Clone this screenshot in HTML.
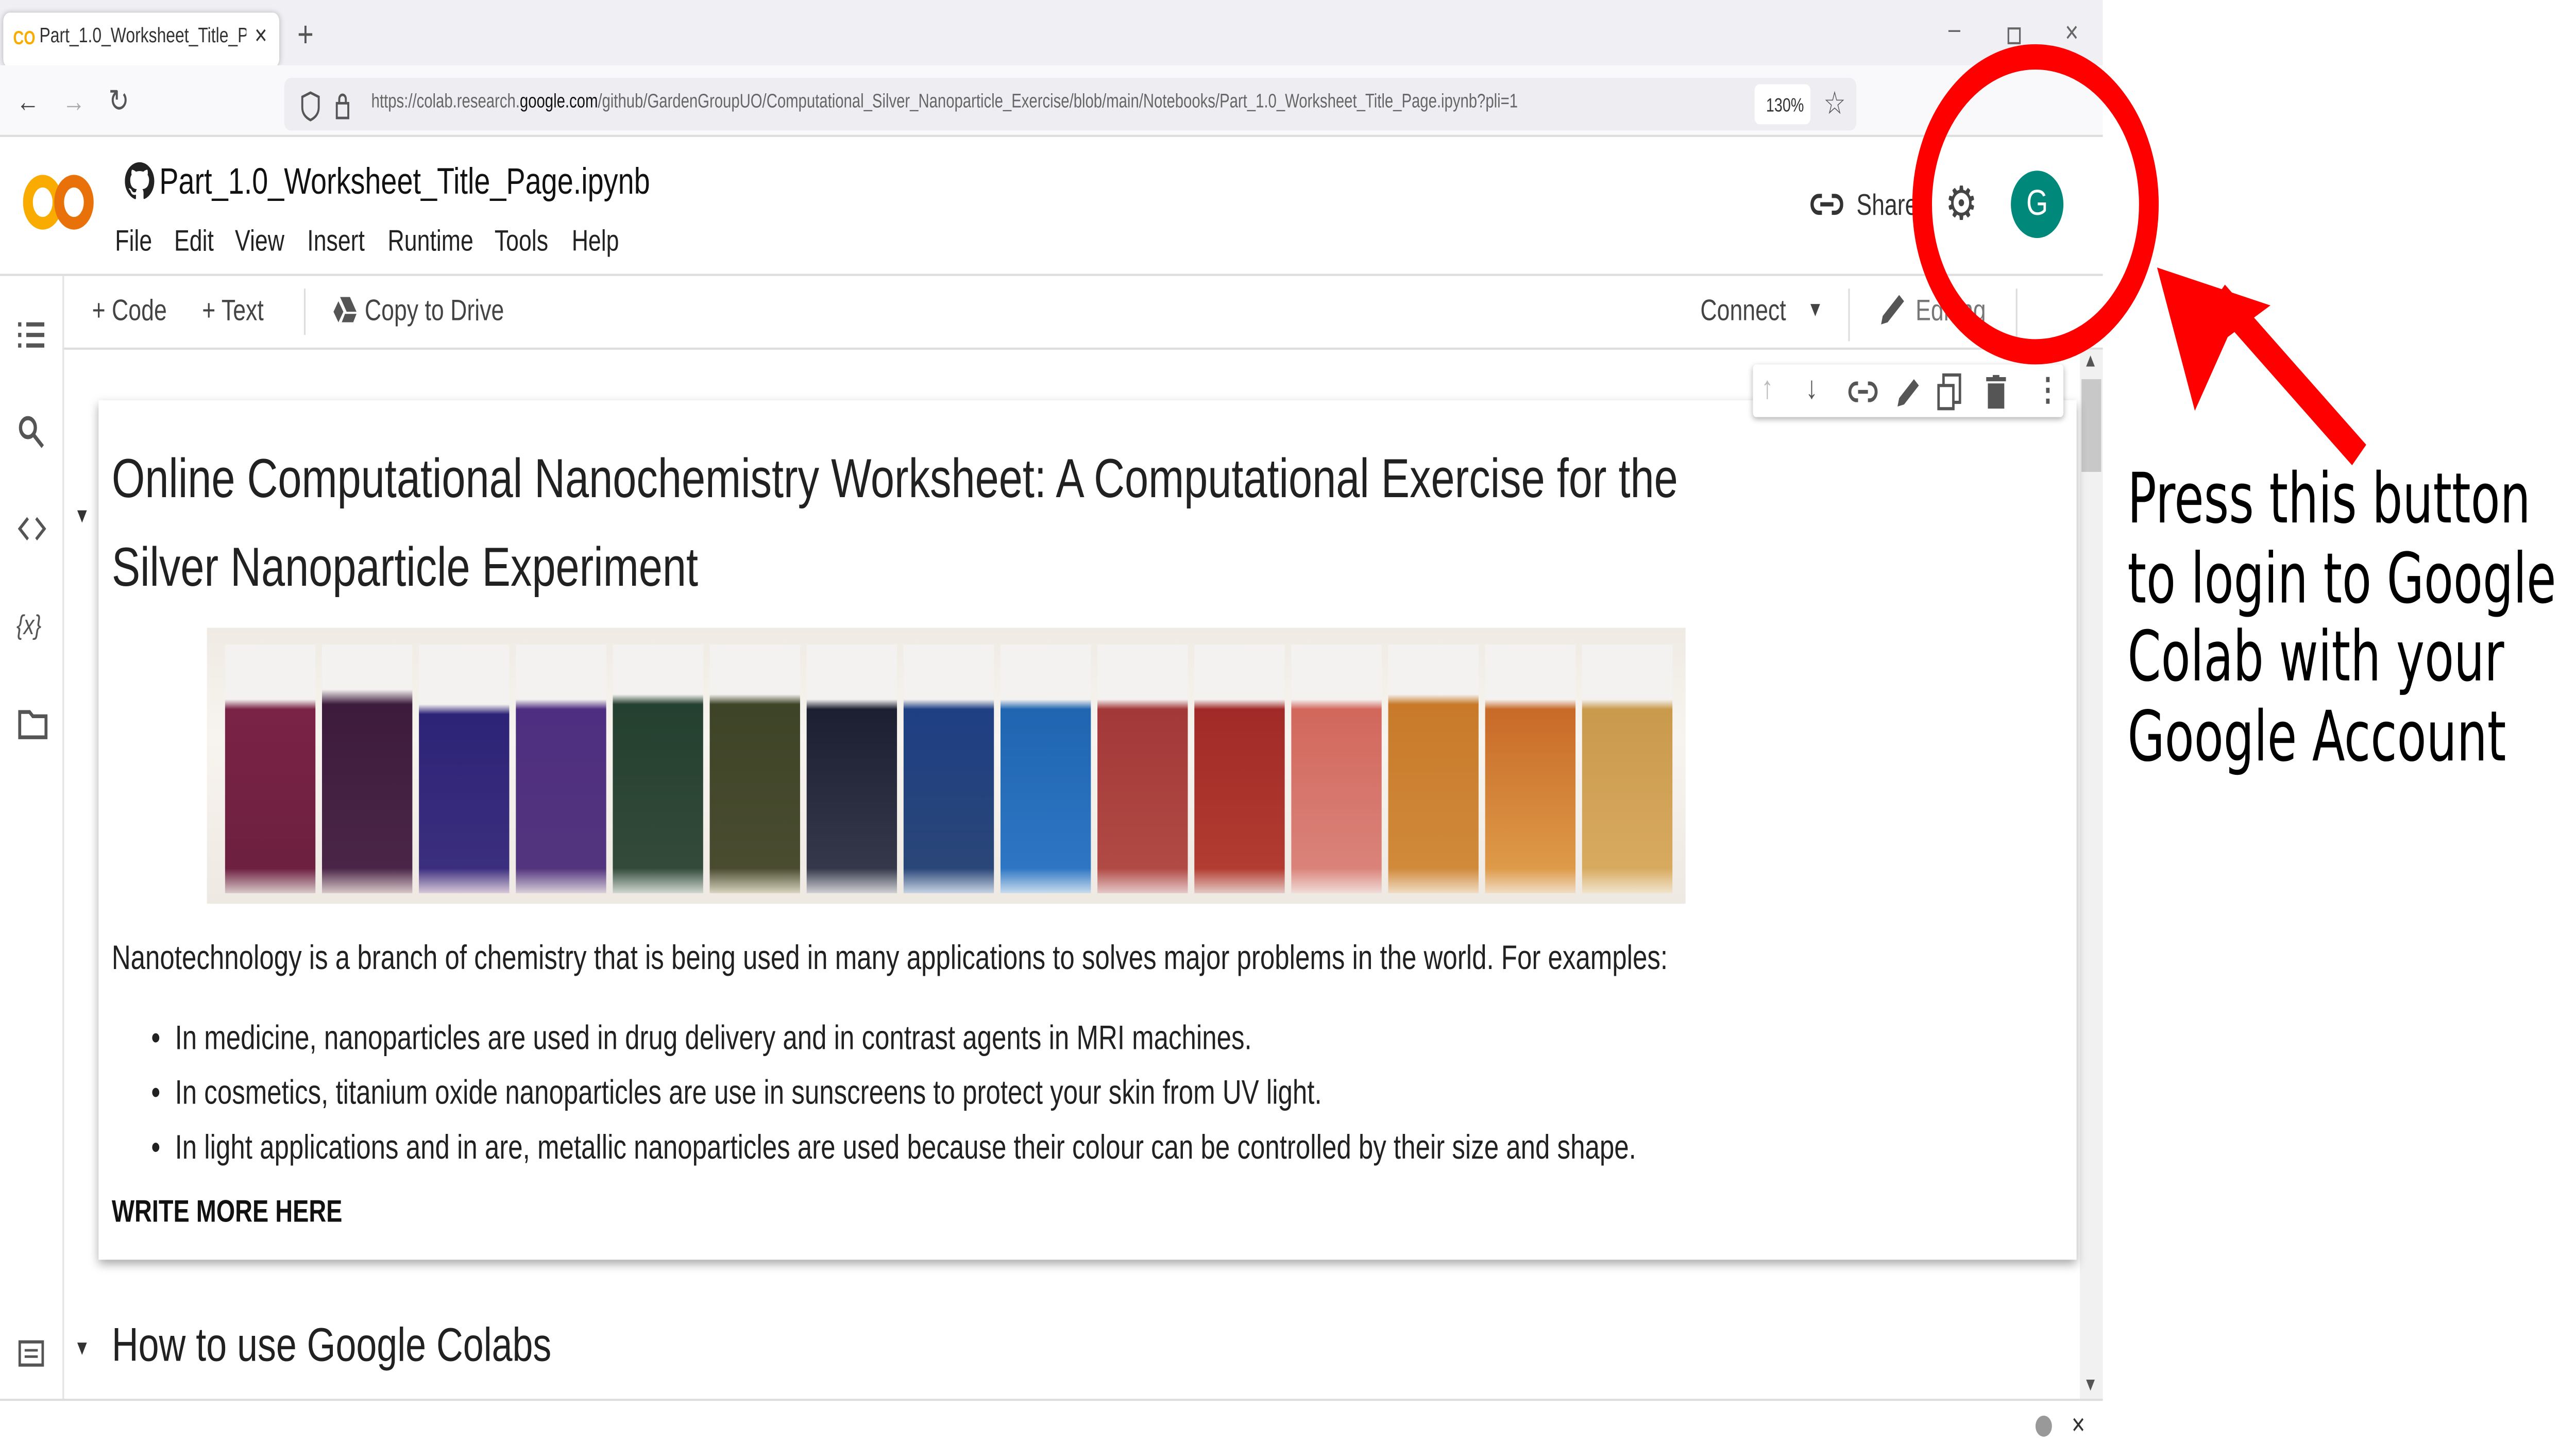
<!DOCTYPE html>
<html><head><meta charset="utf-8">
<style>
*{margin:0;padding:0;box-sizing:border-box}
html,body{width:100vw;height:100vh;overflow:hidden;background:#fff}
#s{position:absolute;left:0;top:0;width:1568px;height:685px;transform:scale(4.0906);transform-origin:0 0;font-family:"Liberation Sans",Arial,sans-serif;color:#212121}
.a{position:absolute}
.t{white-space:nowrap}
.m{position:absolute;top:106px;font-size:14px;color:#222;white-space:nowrap}
</style></head><body><div id="s">
<!-- browser chrome -->
<div class="a" style="left:0;top:0;width:1280px;height:31px;background:#f0f0f4"></div>
<div class="a" style="left:2px;top:6px;width:168px;height:26px;background:#fff;border-radius:4px;box-shadow:0 0 3px rgba(0,0,0,.25)"></div>
<div class="a t" style="left:8px;top:13px;font-size:9px;color:#f9ab00;font-weight:bold">CO</div>
<div class="a t" style="left:24px;top:12px;font-size:10px;color:#333;width:126px;overflow:hidden">Part_1.0_Worksheet_Title_Page.ipynb</div>
<div class="a t" style="left:155px;top:9px;font-size:13px;color:#333">×</div>
<div class="a t" style="left:181px;top:7px;font-size:17px;color:#555">+</div>
<div class="a t" style="left:1186px;top:6px;font-size:13px;color:#666">–</div>
<div class="a" style="left:1222px;top:13px;width:8px;height:8px;border:1px solid #666"></div>
<div class="a t" style="left:1257px;top:7px;font-size:14px;color:#666">×</div>
<div class="a" style="left:0;top:31px;width:1280px;height:34px;background:#f9f9fb;border-bottom:1px solid #ddd"></div>
<div class="a t" style="left:10px;top:40px;font-size:14px;color:#444">←</div>
<div class="a t" style="left:38px;top:40px;font-size:14px;color:#aaa">→</div>
<div class="a t" style="left:66px;top:39px;font-size:15px;color:#555">↻</div>
<div class="a" style="left:173px;top:37px;width:957px;height:25px;background:#eeeef2;border-radius:4px"></div>
<svg class="a" style="left:183px;top:42px" width="30" height="16"><path d="M5 2l5 2v5q0 4-5 6q-5-2-5-6V4z" transform="translate(1,0)" fill="none" stroke="#555" stroke-width="1.2"/><rect x="22" y="7" width="7" height="7" fill="none" stroke="#555" stroke-width="1.2"/><path d="M23.5 7V5a2 2 0 0 1 4 0v2" fill="none" stroke="#555" stroke-width="1.2"/></svg>
<div class="a t" style="left:226px;top:43px;font-size:9.2px;color:#666">https://colab.research.<span style="color:#111">google.com</span>/github/GardenGroupUO/Computational_Silver_Nanoparticle_Exercise/blob/main/Notebooks/Part_1.0_Worksheet_Title_Page.ipynb?pli=1</div>
<div class="a" style="left:1068px;top:40px;width:34px;height:19px;background:#fff;border-radius:3px"></div>
<div class="a t" style="left:1075px;top:45px;font-size:9px;color:#333">130%</div>
<div class="a t" style="left:1110px;top:40px;font-size:15px;color:#555">☆</div>
<!-- colab header -->
<svg class="a" style="left:14px;top:82px" width="44" height="28" viewBox="0 0 44 28"><ellipse cx="12" cy="14" rx="9" ry="10" fill="none" stroke="#f9ab00" stroke-width="6"/><ellipse cx="31" cy="14" rx="9" ry="10" fill="none" stroke="#e8710a" stroke-width="6"/></svg>
<svg class="a" style="left:76px;top:77px" width="18" height="18" viewBox="0 0 16 16"><path d="M8 0a8 8 0 0 0-2.5 15.6c.4 0 .5-.2.5-.4v-1.5c-2.2.5-2.7-1-2.7-1-.4-.9-.9-1.2-.9-1.2-.7-.5.1-.5.1-.5.8.1 1.2.8 1.2.8.7 1.300 1.9.9 2.3.7.1-.5.3-.9.5-1.1-1.8-.2-3.6-.9-3.6-4 0-.9.3-1.6.8-2.1-.1-.2-.4-1 .1-2.1 0 0 .7-.2 2.2.8a7.5 7.5 0 0 1 4 0c1.5-1 2.2-.8 2.2-.8.4 1.1.2 1.9.1 2.1.5.6.8 1.3.8 2.1 0 3.1-1.9 3.8-3.6 4 .3.3.6.8.6 1.5v2.2c0 .2.1.5.6.4A8 8 0 0 0 8 0z" fill="#222"/></svg>
<div class="a t" style="left:97px;top:76px;font-size:17.5px;color:#111">Part_1.0_Worksheet_Title_Page.ipynb</div>
<div class="m" style="left:70px">File</div><div class="m" style="left:106px">Edit</div><div class="m" style="left:143px">View</div><div class="m" style="left:187px">Insert</div><div class="m" style="left:236px">Runtime</div><div class="m" style="left:301px">Tools</div><div class="m" style="left:348px">Help</div>
<svg class="a" style="left:1102px;top:90px" width="20" height="14"><path d="M7 3H5a4 4 0 0 0 0 8h2M13 3h2a4 4 0 0 1 0 8h-2M6 7h8" fill="none" stroke="#333" stroke-width="2"/></svg>
<div class="a t" style="left:1130px;top:89px;font-size:14px;color:#333">Share</div>
<div class="a t" style="left:1184px;top:84px;font-size:22px;color:#444">⚙</div>
<div class="a" style="left:1224px;top:81px;width:32px;height:32px;border-radius:50%;background:#00897b;color:#fff;font-size:17px;text-align:center;line-height:32px">G</div>
<div class="a" style="left:0;top:130px;width:1280px;height:1px;background:#ddd"></div>
<!-- toolbar -->
<div class="a t" style="left:56px;top:139px;font-size:14px;color:#444">+ Code</div>
<div class="a t" style="left:123px;top:139px;font-size:14px;color:#444">+ Text</div>
<div class="a" style="left:185px;top:137px;width:1px;height:22px;background:#ddd"></div>
<svg class="a" style="left:203px;top:141px" width="14" height="12"><path d="M4 0h6l4 7H8zM0 7l3-5 3 5-3 5zM5 12l2-4h7l-2 4z" fill="#555"/></svg>
<div class="a t" style="left:222px;top:139px;font-size:14px;color:#444">Copy to Drive</div>
<div class="a t" style="left:1035px;top:139px;font-size:14px;color:#444">Connect</div>
<div class="a t" style="left:1100px;top:142px;font-size:10px;color:#444">▼</div>
<div class="a" style="left:1125px;top:137px;width:1px;height:25px;background:#ddd"></div>
<svg class="a" style="left:1143px;top:138px" width="18" height="18"><path d="M2 16l1-4 10-10 3 3-10 10z" fill="#555"/></svg>
<div class="a t" style="left:1166px;top:139px;font-size:14px;color:#777">Editing</div>
<div class="a" style="left:1227px;top:137px;width:1px;height:25px;background:#ddd"></div>
<div class="a" style="left:38px;top:165px;width:1242px;height:1px;background:#ddd"></div>
<!-- sidebar -->
<div class="a" style="left:38px;top:131px;width:1px;height:534px;background:#e4e4e4"></div>
<svg class="a" style="left:11px;top:152px" width="16" height="14"><path d="M0 2h2M5 2h11M0 7h2M5 7h11M0 12h2M5 12h11" stroke="#555" stroke-width="2"/></svg>
<svg class="a" style="left:11px;top:197px" width="16" height="16"><circle cx="6" cy="6" r="4.5" fill="none" stroke="#555" stroke-width="2"/><path d="M9 9l6 6" stroke="#555" stroke-width="2"/></svg>
<svg class="a" style="left:11px;top:245px" width="17" height="12"><path d="M6 1L1 6l5 5M11 1l5 5-5 5" fill="none" stroke="#555" stroke-width="1.6"/></svg>
<div class="a t" style="left:10px;top:289px;font-size:13px;color:#555;font-style:italic">{x}</div>
<svg class="a" style="left:11px;top:337px" width="18" height="14"><path d="M1 1h6l2 2h8v10H1z" fill="none" stroke="#555" stroke-width="1.8"/></svg>
<svg class="a" style="left:11px;top:636px" width="16" height="13"><rect x="1" y="1" width="14" height="11" fill="none" stroke="#555" stroke-width="1.5"/><path d="M4 5h8M4 8h8" stroke="#555" stroke-width="1.2"/></svg>
<!-- scrollbar -->
<div class="a" style="left:1266px;top:166px;width:14px;height:499px;background:#f1f1f1"></div>
<div class="a" style="left:1267px;top:180px;width:12px;height:44px;background:#c8c8c8"></div>
<div class="a t" style="left:1268px;top:166px;font-size:9px;color:#555">▲</div>
<div class="a t" style="left:1268px;top:652px;font-size:9px;color:#555">▼</div>
<!-- cell -->
<div class="a" style="left:60px;top:190px;width:1204px;height:408px;background:#fff;box-shadow:0 2px 5px rgba(0,0,0,.35)"></div>
<div class="a" style="left:1067px;top:173px;width:189px;height:25px;background:#fff;box-shadow:0 1px 3px rgba(0,0,0,.3);border-radius:2px"></div>
<div class="a t" style="left:1072px;top:176px;font-size:15px;color:#bbb">↑</div>
<div class="a t" style="left:1099px;top:176px;font-size:15px;color:#555">↓</div>
<svg class="a" style="left:1125px;top:180px" width="18" height="12"><path d="M6 2H5a4 4 0 0 0 0 8h1M12 2h1a4 4 0 0 1 0 8h-1M6 6h6" fill="none" stroke="#555" stroke-width="1.8"/></svg>
<svg class="a" style="left:1153px;top:178px" width="16" height="16"><path d="M2 15l1-4 9-9 3 3-9 9z" fill="#555"/></svg>
<svg class="a" style="left:1179px;top:177px" width="16" height="18"><rect x="4" y="1" width="10" height="13" fill="none" stroke="#555" stroke-width="1.5"/><rect x="1" y="6" width="9" height="11" fill="#fff" stroke="#555" stroke-width="1.5"/></svg>
<svg class="a" style="left:1208px;top:178px" width="14" height="16"><path d="M1 2h12M5 0h4" stroke="#555" stroke-width="2"/><rect x="2" y="4" width="10" height="12" fill="#555"/></svg>
<div class="a t" style="left:1239px;top:176px;font-size:15px;color:#555;font-weight:bold">⋮</div>
<div class="a t" style="left:45px;top:240px;font-size:10px;color:#333">▼</div>
<div class="a t" style="left:68px;top:206px;font-size:26px;color:#212121;line-height:42px">Online Computational Nanochemistry Worksheet: A Computational Exercise for the<br>Silver Nanoparticle Experiment</div>
<!-- tubes image -->
<div class="a" style="left:126px;top:298px;width:900px;height:131px;background:linear-gradient(#efebe4,#f7f3ee 40%,#eee9e2)"></div>
<div class="a" style="left:135px;top:306px;width:885px;height:118px;display:flex">
<div style="flex:1;margin:0 2px;background:linear-gradient(#f4f2f0 22%,#7a2346 26%,#6d2040 90%,#d8c8c8)"></div>
<div style="flex:1;margin:0 2px;background:linear-gradient(#f4f2f0 18%,#3d1b3c 24%,#4a2548 90%,#d8c8c8)"></div>
<div style="flex:1;margin:0 2px;background:linear-gradient(#f4f2f0 24%,#2d2377 28%,#3b2e7e 90%,#d8c8d8)"></div>
<div style="flex:1;margin:0 2px;background:linear-gradient(#f4f2f0 22%,#4e2e80 26%,#52347e 90%,#d8d0d8)"></div>
<div style="flex:1;margin:0 2px;background:linear-gradient(#f4f2f0 20%,#24402f 24%,#334a3a 90%,#d0d8d0)"></div>
<div style="flex:1;margin:0 2px;background:linear-gradient(#f4f2f0 20%,#3e4427 24%,#4a4c30 90%,#d8d4c0)"></div>
<div style="flex:1;margin:0 2px;background:linear-gradient(#f4f2f0 22%,#1c1f31 26%,#34384a 90%,#d0d0d4)"></div>
<div style="flex:1;margin:0 2px;background:linear-gradient(#f4f2f0 22%,#1e3f83 26%,#2a4678 90%,#c8d4e4)"></div>
<div style="flex:1;margin:0 2px;background:linear-gradient(#f4f2f0 22%,#1f65b0 26%,#2e76c4 90%,#c8dcec)"></div>
<div style="flex:1;margin:0 2px;background:linear-gradient(#f4f2f0 22%,#a33838 26%,#b04a44 90%,#e4c8c8)"></div>
<div style="flex:1;margin:0 2px;background:linear-gradient(#f4f2f0 22%,#a12a28 26%,#b23c30 90%,#e4c8c4)"></div>
<div style="flex:1;margin:0 2px;background:linear-gradient(#f4f2f0 22%,#d2675c 26%,#da837a 90%,#f0dcd8)"></div>
<div style="flex:1;margin:0 2px;background:linear-gradient(#f4f2f0 20%,#c87a2a 24%,#d08a3a 90%,#f0dcc4)"></div>
<div style="flex:1;margin:0 2px;background:linear-gradient(#f4f2f0 22%,#c86a28 26%,#de9a48 90%,#f0dcc4)"></div>
<div style="flex:1;margin:0 2px;background:linear-gradient(#f4f2f0 22%,#c99a4c 26%,#d8aa60 90%,#f0e4cc)"></div>
</div>
<div class="a t" style="left:68px;top:447px;font-size:16px;color:#212121">Nanotechnology is a branch of chemistry that is being used in many applications to solves major problems in the world. For examples:</div>
<div class="a t" style="left:92px;top:481px;font-size:16px;color:#212121;line-height:26px">•&nbsp; In medicine, nanoparticles are used in drug delivery and in contrast agents in MRI machines.<br>•&nbsp; In cosmetics, titanium oxide nanoparticles are use in sunscreens to protect your skin from UV light.<br>•&nbsp; In light applications and in are, metallic nanoparticles are used because their colour can be controlled by their size and shape.</div>
<div class="a t" style="left:68px;top:568px;font-size:14.7px;color:#111;font-weight:bold">WRITE MORE HERE</div>
<div class="a t" style="left:45px;top:635px;font-size:10px;color:#333">▼</div>
<div class="a t" style="left:68px;top:626px;font-size:22.5px;color:#212121">How to use Google Colabs</div>
<!-- status bar -->
<div class="a" style="left:0;top:664px;width:1280px;height:1px;background:#ddd"></div>
<div class="a" style="left:1239px;top:672px;width:10px;height:10px;border-radius:50%;background:#999"></div>
<div class="a t" style="left:1261px;top:668px;font-size:14px;color:#333">×</div>
<!-- annotation -->
<svg class="a" style="left:0;top:0" width="1568" height="685">
<ellipse cx="1239" cy="97" rx="69" ry="70" fill="none" stroke="#ff0000" stroke-width="12"/>
<path d="M1436 216L1350 140" stroke="#ff0000" stroke-width="13"/>
<polygon points="1313,127 1382,145 1356,160 1336,195" fill="#ff0000"/>
</svg>
<div class="a t" style="left:1295px;top:218px;font-family:'DejaVu Sans',sans-serif;font-size:33px;line-height:37.5px;color:#000;transform:scaleX(0.886);transform-origin:0 0">Press this button<br>to login to Google<br>Colab with your<br>Google Account</div>
</div>
<script>
(function(){var d=document.documentElement;var w=d.clientWidth||window.innerWidth,h=d.clientHeight||window.innerHeight;if(w>0&&h>0){document.getElementById('s').style.transform='scale('+(w/1568)+','+(h/685)+')';}})();
</script>
</body></html>
